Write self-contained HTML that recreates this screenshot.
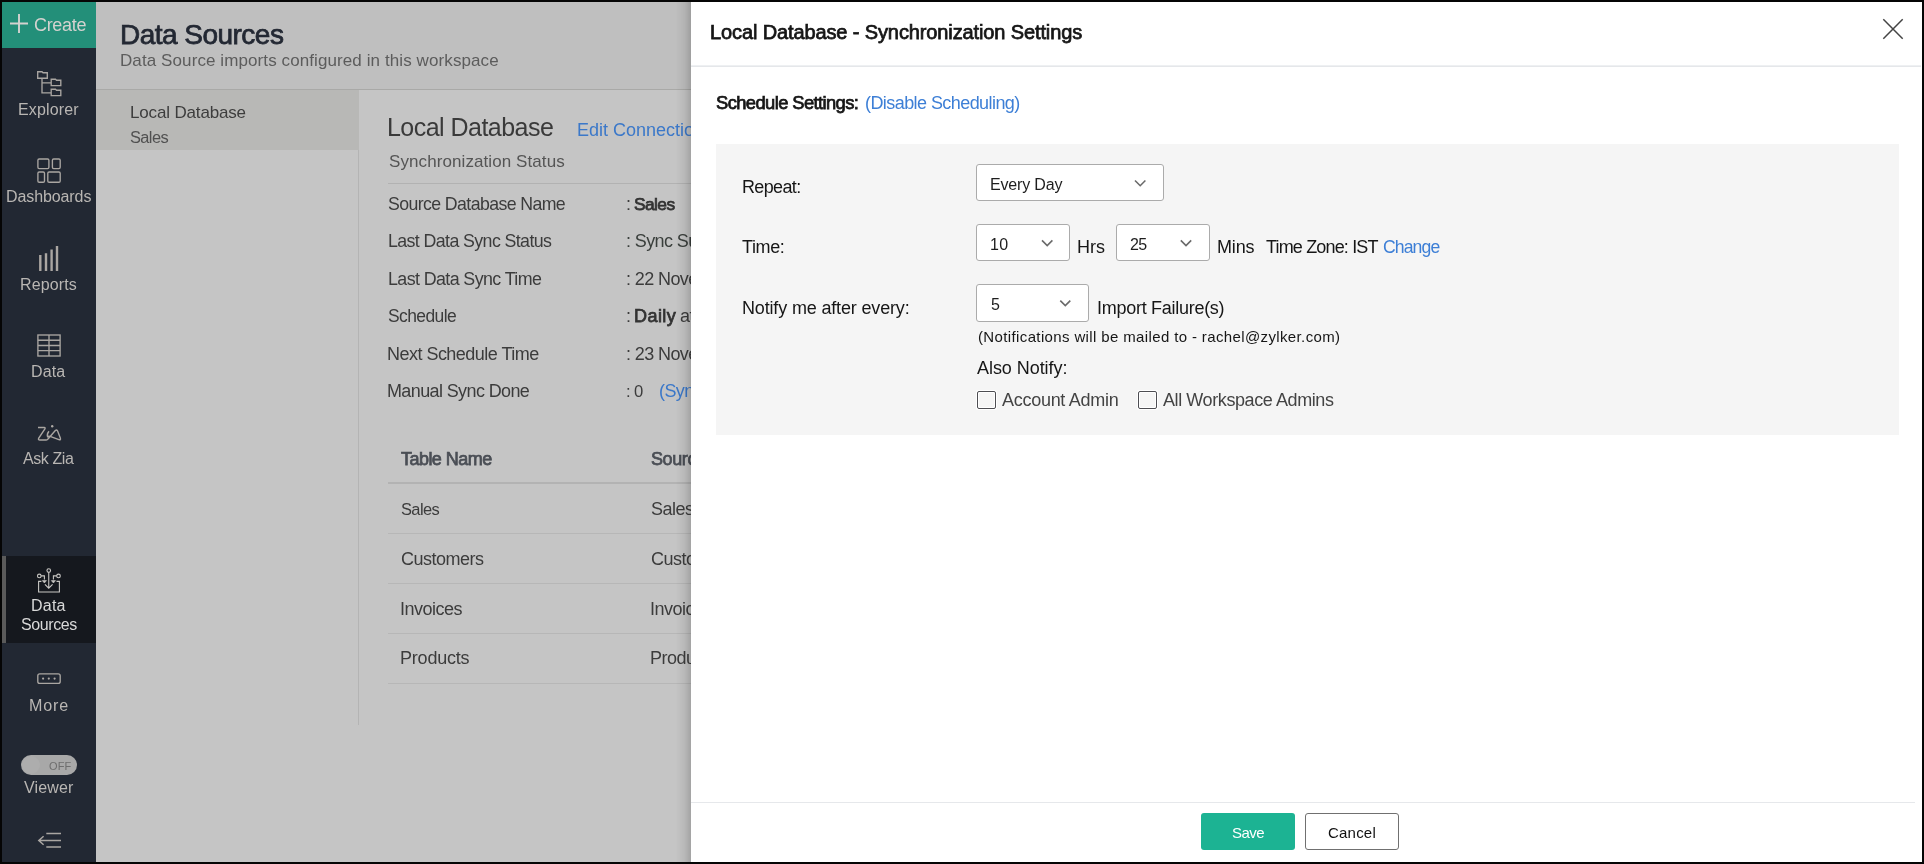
<!DOCTYPE html>
<html>
<head>
<meta charset="utf-8">
<style>
html,body{margin:0;padding:0;}
body{width:1924px;height:864px;background:#050505;position:relative;overflow:hidden;font-family:"Liberation Sans",sans-serif;}
.a{position:absolute;}
.tx{position:absolute;white-space:pre;line-height:normal;font-family:"Liberation Sans",sans-serif;will-change:transform;}
svg{position:absolute;overflow:visible;}
</style>
</head>
<body>
<!-- sidebar -->
<div class="a" style="left:2px;top:2px;width:94px;height:860px;background:#222833;"></div>
<div class="a" style="left:2px;top:2px;width:94px;height:46px;background:#238f79;"></div>
<svg style="left:0;top:0" width="100" height="50"><path d="M19 14V33M10 23.5H28" stroke="#d4d2cf" stroke-width="1.9" fill="none"/></svg>

<!-- explorer icon -->
<svg style="left:0;top:0" width="100" height="860" fill="none" stroke="#aaa6a2" stroke-width="1.35">
  <path d="M37.7 71.7h4.3l1 1h4.3v5.6h-9.6z"/>
  <path d="M42 78.3V92.8H51M42 82.8H51"/>
  <path d="M51.2 79.2h4.3l1 1h4.3v5.4h-9.6z"/>
  <path d="M51.2 89.2h4.3l1 1h4.3v5.4h-9.6z"/>
  <!-- dashboards -->
  <rect x="37.9" y="159" width="11" height="9.6" rx="1.3"/>
  <rect x="52.4" y="159" width="7.8" height="9.6" rx="1.3"/>
  <rect x="37.9" y="172" width="6.6" height="10.2" rx="1.3"/>
  <rect x="47.8" y="172" width="12.4" height="10.2" rx="1.3"/>
  <!-- reports -->
  <path d="M40.3 271V255M46 271V253.2M51.6 271V249.4M57 271V246" stroke-width="2.4"/>
  <!-- data grid -->
  <rect x="37.9" y="335" width="22.2" height="21" />
  <path d="M49 335V356M37.9 340.2H60.1M37.9 345.5H60.1M37.9 350.6H60.1"/>
  <!-- ask zia -->
  <path d="M38 427.5H44.2Q45.6 427.6 44.9 428.9L38.6 438.4Q38 440 39.8 440H46.3Q47.4 440 48 439L55.3 430.6Q56.8 429.3 57.6 431L60.4 438.3Q60.9 440.3 58.9 439.6L50.8 436.6Q48.8 435.9 47.6 436.7Q46.6 434 49 431.2" stroke-width="1.4"/>
  <circle cx="52.2" cy="426.2" r="1.2" fill="#aeaaa6" stroke="none"/>
  <!-- more -->
  <rect x="37.8" y="673.8" width="22.4" height="9.6" rx="2"/>
  <circle cx="43.1" cy="678.6" r="1.1" fill="#aeaaa6" stroke="none"/>
  <circle cx="48.8" cy="678.6" r="1.1" fill="#aeaaa6" stroke="none"/>
  <circle cx="54.6" cy="678.6" r="1.1" fill="#aeaaa6" stroke="none"/>
  <!-- collapse -->
  <path d="M46.3 833.5H61M38.8 840.5H61M46.3 847.1H61M43.6 836.2L38.8 840.5L43.6 844.8" stroke-width="1.5"/>
</svg>

<!-- active item -->
<div class="a" style="left:2px;top:556px;width:94px;height:87px;background:#15181e;"></div>
<div class="a" style="left:2px;top:556px;width:4px;height:87px;background:#5a5a5a;"></div>
<svg style="left:0;top:0" width="100" height="860" fill="none" stroke="#c9c7c4" stroke-width="1.1">
  <circle cx="48.75" cy="570.6" r="1.8"/>
  <circle cx="39.3" cy="575.9" r="1.8"/>
  <circle cx="58.5" cy="575.9" r="1.8"/>
  <path d="M48.75 572.4V588.2M44.9 584.3L48.75 588.2L52.6 584.3"/>
  <path d="M41.1 575.9H44.4V579.5M56.7 575.9H53.4V579.5"/>
  <path d="M42.3 580.6L44.4 583L46.5 580.6ZM51.3 580.6L53.4 583L55.5 580.6Z" fill="#c9c7c4" stroke-width="0.6"/>
  <path d="M41.4 581.4H38.6V592H59.4V581.4H56.5"/>
</svg>

<!-- viewer toggle -->
<div class="a" style="left:21px;top:755px;width:56px;height:20px;border-radius:10px;background:#a8a8a8;"></div>
<div class="a" style="left:22px;top:756px;width:18px;height:18px;border-radius:9px;background:#adadad;"></div>

<!-- header -->
<div class="a" style="left:96px;top:2px;width:595px;height:87px;background:#bfbfbf;"></div>
<div class="a" style="left:96px;top:89px;width:595px;height:1px;background:#a9a9a7;"></div>
<div class="a" style="left:96px;top:90px;width:595px;height:772px;background:#c5c5c5;"></div>
<div class="a" style="left:96px;top:90px;width:263px;height:60px;background:#b8b8b6;"></div>
<div class="a" style="left:358px;top:150px;width:1px;height:575px;background:#b4b4b4;"></div>
<div class="a" style="left:388px;top:183px;width:303px;height:1px;background:#b2b2b2;"></div>
<div class="a" style="left:388px;top:482px;width:303px;height:2px;background:#b3b3b3;"></div>
<div class="a" style="left:388px;top:533px;width:303px;height:1px;background:#b7b7b7;"></div>
<div class="a" style="left:388px;top:583px;width:303px;height:1px;background:#b7b7b7;"></div>
<div class="a" style="left:388px;top:633px;width:303px;height:1px;background:#b7b7b7;"></div>
<div class="a" style="left:388px;top:683px;width:303px;height:1px;background:#b7b7b7;"></div>

<div class="tx" style="left:33.60px;top:15.00px;font-size:18.00px;font-weight:400;color:#d4d2cf;letter-spacing:-0.323px;">Create</div>
<div class="tx" style="left:17.75px;top:101.20px;font-size:16.00px;font-weight:400;color:#b9b6b3;letter-spacing:0.143px;">Explorer</div>
<div class="tx" style="left:5.60px;top:187.50px;font-size:16.00px;font-weight:400;color:#b9b6b3;letter-spacing:-0.097px;">Dashboards</div>
<div class="tx" style="left:20.20px;top:276.00px;font-size:16.00px;font-weight:400;color:#b9b6b3;letter-spacing:0.129px;">Reports</div>
<div class="tx" style="left:31.40px;top:362.50px;font-size:16.00px;font-weight:400;color:#b9b6b3;letter-spacing:0.134px;">Data</div>
<div class="tx" style="left:23.00px;top:450.40px;font-size:16.00px;font-weight:400;color:#b9b6b3;letter-spacing:-0.408px;">Ask Zia</div>
<div class="tx" style="left:31.40px;top:597.30px;font-size:16.00px;font-weight:400;color:#d9d9d9;letter-spacing:0.234px;">Data</div>
<div class="tx" style="left:20.80px;top:616.40px;font-size:16.00px;font-weight:400;color:#d9d9d9;letter-spacing:-0.416px;">Sources</div>
<div class="tx" style="left:28.89px;top:695.90px;font-size:16.11px;font-weight:400;color:#b9b6b3;letter-spacing:0.800px;">More</div>
<div class="tx" style="left:23.70px;top:778.70px;font-size:16.00px;font-weight:400;color:#b9b6b3;letter-spacing:0.122px;">Viewer</div>
<div class="tx" style="left:49.00px;top:760.30px;font-size:11.00px;font-weight:400;color:#6e6e6e;letter-spacing:0.162px;">OFF</div>
<div class="tx" style="left:119.90px;top:18.60px;font-size:28.00px;font-weight:400;color:#232833;letter-spacing:-0.522px;-webkit-text-stroke:0.75px #232833;">Data Sources</div>
<div class="tx" style="left:120.00px;top:50.70px;font-size:17.00px;font-weight:400;color:#5c5c5c;letter-spacing:0.095px;">Data Source imports configured in this workspace</div>
<div class="tx" style="left:129.60px;top:102.70px;font-size:17.00px;font-weight:400;color:#3d3d3d;letter-spacing:-0.160px;">Local Database</div>
<div class="tx" style="left:130.20px;top:128.21px;font-size:16.42px;font-weight:400;color:#505050;letter-spacing:-0.600px;">Sales</div>
<div class="tx" style="left:387.10px;top:112.80px;font-size:25.00px;font-weight:400;color:#3a3a3a;letter-spacing:-0.533px;">Local Database</div>
<div class="tx" style="left:576.60px;top:119.80px;font-size:18.00px;font-weight:400;color:#3b78c9;letter-spacing:0.000px;">Edit Connection</div>
<div class="tx" style="left:388.60px;top:151.90px;font-size:17.00px;font-weight:400;color:#555;letter-spacing:0.087px;">Synchronization Status</div>
<div class="tx" style="left:388.30px;top:194.14px;font-size:17.73px;font-weight:400;color:#3c3c3c;letter-spacing:-0.600px;">Source Database Name</div>
<div class="tx" style="left:387.81px;top:230.88px;font-size:17.80px;font-weight:400;color:#3c3c3c;letter-spacing:-0.600px;">Last Data Sync Status</div>
<div class="tx" style="left:387.81px;top:268.83px;font-size:17.85px;font-weight:400;color:#3c3c3c;letter-spacing:-0.600px;">Last Data Sync Time</div>
<div class="tx" style="left:388.30px;top:306.16px;font-size:17.48px;font-weight:400;color:#3c3c3c;letter-spacing:-0.600px;">Schedule</div>
<div class="tx" style="left:387.30px;top:343.70px;font-size:18.00px;font-weight:400;color:#3c3c3c;letter-spacing:-0.523px;">Next Schedule Time</div>
<div class="tx" style="left:387.30px;top:380.82px;font-size:17.98px;font-weight:400;color:#3c3c3c;letter-spacing:-0.600px;">Manual Sync Done</div>
<div class="tx" style="left:625.60px;top:193.90px;font-size:18.00px;font-weight:400;color:#3c3c3c;letter-spacing:0.000px;">:</div>
<div class="tx" style="left:634.10px;top:194.44px;font-size:17.39px;font-weight:400;color:#333;letter-spacing:-0.600px;-webkit-text-stroke:0.75px #333;">Sales</div>
<div class="tx" style="left:625.60px;top:230.70px;font-size:18.00px;font-weight:400;color:#3a3f3c;letter-spacing:0.000px;letter-spacing:-0.6px">: Sync Successful</div>
<div class="tx" style="left:625.60px;top:268.70px;font-size:18.00px;font-weight:400;color:#3c3c3c;letter-spacing:0.000px;letter-spacing:-0.6px">: 22 November 2023 10:25</div>
<div class="tx" style="left:625.60px;top:305.70px;font-size:18.00px;font-weight:400;color:#3c3c3c;letter-spacing:0.000px;">:</div>
<div class="tx" style="left:633.70px;top:305.70px;font-size:18.00px;font-weight:400;color:#333;letter-spacing:0.448px;-webkit-text-stroke:0.75px #333;">Daily</div>
<div class="tx" style="left:680.00px;top:305.70px;font-size:18.00px;font-weight:400;color:#3c3c3c;letter-spacing:0.000px;letter-spacing:-0.6px">at 10:25</div>
<div class="tx" style="left:625.60px;top:343.70px;font-size:18.00px;font-weight:400;color:#3c3c3c;letter-spacing:0.000px;letter-spacing:-0.6px">: 23 November 2023 10:25</div>
<div class="tx" style="left:625.67px;top:381.98px;font-size:16.67px;font-weight:400;color:#3c3c3c;letter-spacing:-0.600px;">: 0</div>
<div class="tx" style="left:659.20px;top:380.80px;font-size:18.00px;font-weight:400;color:#3b78c9;letter-spacing:0.000px;letter-spacing:-0.6px">(Sync Now)</div>
<div class="tx" style="left:400.80px;top:448.90px;font-size:18.00px;font-weight:400;color:#4a4e55;letter-spacing:-0.537px;-webkit-text-stroke:0.75px #4a4e55;">Table Name</div>
<div class="tx" style="left:651.00px;top:448.90px;font-size:18.00px;font-weight:400;color:#4a4e55;letter-spacing:0.000px;-webkit-text-stroke:0.75px #4a4e55;letter-spacing:-0.4px">Source Table</div>
<div class="tx" style="left:400.80px;top:500.36px;font-size:16.47px;font-weight:400;color:#3c3c3c;letter-spacing:-0.600px;">Sales</div>
<div class="tx" style="left:651.00px;top:499.00px;font-size:18.00px;font-weight:400;color:#3c3c3c;letter-spacing:0.000px;letter-spacing:-0.5px">Sales</div>
<div class="tx" style="left:400.80px;top:548.60px;font-size:18.00px;font-weight:400;color:#3c3c3c;letter-spacing:-0.515px;">Customers</div>
<div class="tx" style="left:651.00px;top:548.60px;font-size:18.00px;font-weight:400;color:#3c3c3c;letter-spacing:0.000px;letter-spacing:-0.5px">Customers</div>
<div class="tx" style="left:399.80px;top:598.60px;font-size:18.00px;font-weight:400;color:#3c3c3c;letter-spacing:-0.490px;">Invoices</div>
<div class="tx" style="left:650.00px;top:598.60px;font-size:18.00px;font-weight:400;color:#3c3c3c;letter-spacing:0.000px;letter-spacing:-0.5px">Invoices</div>
<div class="tx" style="left:399.80px;top:648.40px;font-size:18.00px;font-weight:400;color:#3c3c3c;letter-spacing:-0.205px;">Products</div>
<div class="tx" style="left:650.00px;top:648.40px;font-size:18.00px;font-weight:400;color:#3c3c3c;letter-spacing:0.000px;letter-spacing:-0.5px">Products</div>

<!-- shadow -->
<div class="a" style="left:676px;top:2px;width:15px;height:860px;background:linear-gradient(to right,rgba(0,0,0,0),rgba(0,0,0,0.06) 55%,rgba(0,0,0,0.17));"></div>
<!-- dialog -->
<div class="a" id="dlg" style="left:691px;top:2px;width:1231px;height:860px;background:#ffffff;">
</div>
<div class="a" style="left:691px;top:65px;width:1230px;height:1px;background:#eef0f2;"></div><div class="a" style="left:691px;top:66px;width:1230px;height:1px;background:#e5e7ea;"></div>
<svg style="left:0;top:0" width="1924" height="60"><path d="M1883.3 19.3L1902.7 38.7M1902.7 19.3L1883.3 38.7" stroke="#444" stroke-width="1.5" fill="none"/></svg>
<div class="a" style="left:716px;top:144px;width:1183px;height:291px;background:#f5f5f5;"></div>
<!-- selects -->
<div class="a" style="left:976px;top:164px;width:186px;height:35px;border:1px solid #ababab;border-radius:3px;background:#fff;"></div>
<div class="a" style="left:976px;top:224px;width:92px;height:35px;border:1px solid #ababab;border-radius:3px;background:#fff;"></div>
<div class="a" style="left:1116px;top:224px;width:92px;height:35px;border:1px solid #ababab;border-radius:3px;background:#fff;"></div>
<div class="a" style="left:976px;top:284px;width:111px;height:36px;border:1px solid #ababab;border-radius:3px;background:#fff;"></div>
<svg style="left:0;top:0" width="1924" height="420" fill="none" stroke="#6a6a6a" stroke-width="1.6">
  <path d="M1135 180.5L1140.2 185.7L1145.4 180.5"/>
  <path d="M1042 240.4L1047.2 245.6L1052.4 240.4"/>
  <path d="M1180.8 240.4L1186 245.6L1191.2 240.4"/>
  <path d="M1060.3 300.6L1065.3 305.6L1070.3 300.6"/>
</svg>
<!-- checkboxes -->
<div class="a" style="left:977px;top:391px;width:17px;height:16px;border:1px solid #4d4d52;border-radius:2px;background:#f5f5f5;box-shadow:inset 0 0 0 1px #fff,0 0 0 1px #fff;"></div>
<div class="a" style="left:1138px;top:391px;width:17px;height:16px;border:1px solid #4d4d52;border-radius:2px;background:#f5f5f5;box-shadow:inset 0 0 0 1px #fff,0 0 0 1px #fff;"></div>
<!-- footer -->
<div class="a" style="left:691px;top:802px;width:1224px;height:1px;background:#e6e8eb;"></div>
<div class="a" style="left:1201px;top:813px;width:94px;height:37px;border-radius:3px;background:#1cb393;"></div>
<div class="a" style="left:1305px;top:813px;width:92px;height:35px;border:1px solid #707070;border-radius:3px;background:#fff;"></div>

<div class="tx" style="left:709.90px;top:20.80px;font-size:20.00px;font-weight:400;color:#161616;letter-spacing:-0.117px;-webkit-text-stroke:0.75px #161616;">Local Database - Synchronization Settings</div>
<div class="tx" style="left:716.00px;top:92.46px;font-size:18.38px;font-weight:400;color:#161616;letter-spacing:-0.600px;-webkit-text-stroke:0.75px #161616;">Schedule Settings:</div>
<div class="tx" style="left:864.70px;top:92.70px;font-size:18.00px;font-weight:400;color:#3d7fd6;letter-spacing:-0.568px;">(Disable Scheduling)</div>
<div class="tx" style="left:741.90px;top:176.94px;font-size:17.96px;font-weight:400;color:#161616;letter-spacing:-0.600px;">Repeat:</div>
<div class="tx" style="left:989.60px;top:176.10px;font-size:16.00px;font-weight:400;color:#1e1e1e;letter-spacing:-0.162px;">Every Day</div>
<div class="tx" style="left:742.10px;top:237.10px;font-size:18.00px;font-weight:400;color:#161616;letter-spacing:-0.383px;">Time:</div>
<div class="tx" style="left:990.10px;top:236.10px;font-size:16.00px;font-weight:400;color:#1e1e1e;letter-spacing:0.302px;">10</div>
<div class="tx" style="left:1077.00px;top:236.80px;font-size:18.00px;font-weight:400;color:#161616;letter-spacing:0.003px;">Hrs</div>
<div class="tx" style="left:1130.10px;top:236.10px;font-size:16.00px;font-weight:400;color:#1e1e1e;letter-spacing:-0.598px;">25</div>
<div class="tx" style="left:1217.00px;top:237.00px;font-size:18.00px;font-weight:400;color:#161616;letter-spacing:-0.135px;">Mins</div>
<div class="tx" style="left:1266.20px;top:236.90px;font-size:18.00px;font-weight:400;color:#161616;letter-spacing:-0.836px;">Time Zone: IST</div>
<div class="tx" style="left:1383.40px;top:237.24px;font-size:17.62px;font-weight:400;color:#3d7fd6;letter-spacing:-0.900px;">Change</div>
<div class="tx" style="left:741.50px;top:298.10px;font-size:18.00px;font-weight:400;color:#161616;letter-spacing:-0.160px;">Notify me after every:</div>
<div class="tx" style="left:991.00px;top:296.00px;font-size:16.00px;font-weight:400;color:#1e1e1e;letter-spacing:0.000px;">5</div>
<div class="tx" style="left:1096.60px;top:298.20px;font-size:18.00px;font-weight:400;color:#161616;letter-spacing:-0.277px;">Import Failure(s)</div>
<div class="tx" style="left:977.60px;top:327.90px;font-size:15.00px;font-weight:400;color:#161616;letter-spacing:0.370px;">(Notifications will be mailed to - rachel@zylker.com)</div>
<div class="tx" style="left:977.10px;top:357.90px;font-size:18.00px;font-weight:400;color:#161616;letter-spacing:-0.057px;">Also Notify:</div>
<div class="tx" style="left:1002.20px;top:389.80px;font-size:18.00px;font-weight:400;color:#444;letter-spacing:-0.279px;">Account Admin</div>
<div class="tx" style="left:1163.40px;top:390.10px;font-size:18.00px;font-weight:400;color:#444;letter-spacing:-0.412px;">All Workspace Admins</div>
<div class="tx" style="left:1231.80px;top:823.90px;font-size:15.00px;font-weight:400;color:#ffffff;letter-spacing:-0.516px;">Save</div>
<div class="tx" style="left:1328.00px;top:824.00px;font-size:15.00px;font-weight:400;color:#111;letter-spacing:0.208px;">Cancel</div>
</body>
</html>
